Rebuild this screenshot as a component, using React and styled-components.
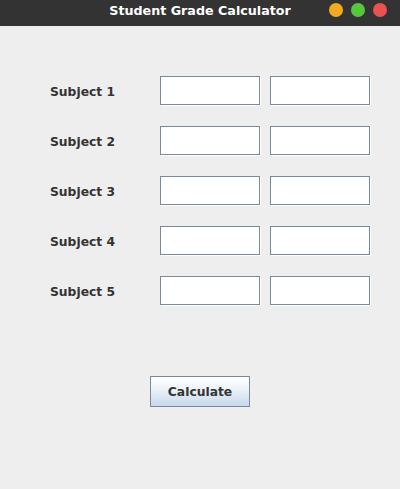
import styled, { createGlobalStyle } from "styled-components";

const GlobalStyle = createGlobalStyle`
  html, body {
    margin: 0;
    padding: 0;
    background: #eeeeee;
    height: 100%;
  }
  #root {
    min-height: 100%;
  }
`;

const Window = styled.div`
  width: 400px;
  height: 489px;
  background: #eeeeee;
  font-family: "DejaVu Sans", "Liberation Sans", sans-serif;
  display: flex;
  flex-direction: column;
`;

const TitleBar = styled.div`
  height: 26px;
  background: #333333;
  display: grid;
  grid-template-columns: 1fr auto 1fr;
  align-items: center;
`;

const Title = styled.div`
  grid-column: 2;
  color: #ffffff;
  font-weight: bold;
  font-size: 12.7px;
  margin-top: -6px;
`;

const Dots = styled.div`
  justify-self: end;
  display: flex;
  gap: 8px;
  padding-right: 13px;
  margin-top: -6px;
`;

const Dot = styled.span`
  width: 14px;
  height: 14px;
  border-radius: 50%;
  background: ${(p) => p.$color};
`;

const Form = styled.div`
  display: grid;
  grid-template-columns: 100px 100px 100px;
  column-gap: 10px;
  row-gap: 21px;
  padding: 50px 0 0 50px;
`;

const Label = styled.div`
  font-size: 12.3px;
  font-weight: bold;
  color: #333333;
  display: flex;
  align-items: center;
  height: 29px;
  padding-top: 3px;
  box-sizing: border-box;
`;

const Field = styled.input`
  box-sizing: border-box;
  width: 100px;
  height: 29px;
  margin: 0;
  border: 1px solid #7a8a99;
  background: #ffffff;
  box-shadow: 1px 1px 0 #ffffff;
  outline: none;
  padding: 0 4px;
  font-family: inherit;
  font-size: 13px;
`;

const Actions = styled.div`
  display: flex;
  justify-content: center;
  padding-top: 71px;
`;

const Button = styled.button`
  box-sizing: border-box;
  width: 100px;
  height: 31px;
  border: 1px solid #7a8a99;
  background: linear-gradient(to bottom, #ffffff 0%, #eef3f9 40%, #c6d8ea 100%);
  color: #333333;
  font-family: inherit;
  font-weight: bold;
  font-size: 12.3px;
  padding: 0;
`;

const subjects = ["Subject 1", "Subject 2", "Subject 3", "Subject 4", "Subject 5"];

export default function App() {
  return (
    <>
      <GlobalStyle />
      <Window>
        <TitleBar>
          <Title>Student Grade Calculator</Title>
          <Dots>
            <Dot $color="#f3aa1e" />
            <Dot $color="#56c63a" />
            <Dot $color="#e9524e" />
          </Dots>
        </TitleBar>
        <Form>
          {subjects.map((s) => (
            <Row key={s} label={s} />
          ))}
        </Form>
        <Actions>
          <Button>Calculate</Button>
        </Actions>
      </Window>
    </>
  );
}

function Row({ label }) {
  return (
    <>
      <Label>{label}</Label>
      <Field type="text" />
      <Field type="text" />
    </>
  );
}
